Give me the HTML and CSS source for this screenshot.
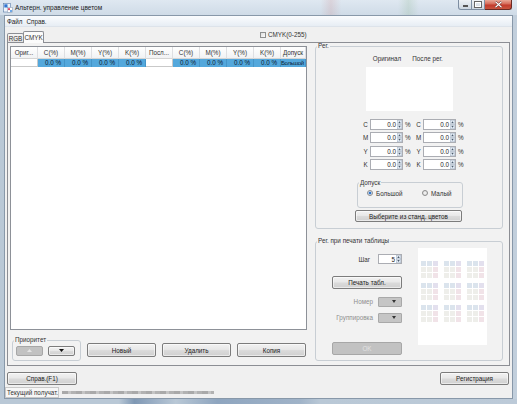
FILE: index.html
```html
<!DOCTYPE html>
<html lang="ru">
<head>
<meta charset="utf-8">
<title>Альтерн. управление цветом</title>
<link rel="stylesheet" href="styles.css">
</head>
<body>
<div class="titlebar">
  <svg class="app-icon" width="10" height="10" viewBox="0 0 10 10">
    <rect x="0.5" y="0.5" width="7" height="8.5" fill="#eef3fa" stroke="#5a7ea8" stroke-width="0.6"/>
    <rect x="1.3" y="1.3" width="3.2" height="3.2" fill="#2f74d0"/>
    <rect x="4.3" y="4.3" width="5.2" height="5.2" fill="#fff" stroke="#7a8ea8" stroke-width="0.5"/>
    <circle cx="6" cy="6.2" r="1.1" fill="#e0405a"/>
    <circle cx="8" cy="8" r="1" fill="#3d8be0"/>
  </svg>
  <span class="title">Альтерн. управление цветом</span>
  <div class="controls">
    <span class="ctl min"><span class="g-min"></span></span>
    <span class="ctl max"><span class="g-max"></span></span>
    <span class="ctl close">
      <svg width="9" height="7" viewBox="0 0 9 7"><path d="M1.5 0.8 L7.5 6.2 M7.5 0.8 L1.5 6.2" stroke="#5a1a14" stroke-width="2.2"/><path d="M1.5 0.8 L7.5 6.2 M7.5 0.8 L1.5 6.2" stroke="#fff" stroke-width="1.2"/></svg>
    </span>
  </div>
</div>

<div class="client">
  <div class="menubar"><span>Файл</span><span>Справ.</span></div>

  <div class="tabrow">
    <div class="tab">RGB</div>
    <div class="tab active">CMYK</div>
    <label class="check"><span class="box"></span>CMYK(0-255)</label>
  </div>

  <div class="panel">
    <div class="leftcol">
      <div class="table">
        <div class="thead">
          <div>Ориг...</div><div>C(%)</div><div>M(%)</div><div>Y(%)</div><div>K(%)</div>
          <div>Посл...</div><div>C(%)</div><div>M(%)</div><div>Y(%)</div><div>K(%)</div><div>Допуск</div>
        </div>
        <div class="trow">
          <div class="w"></div><div class="b">0.0 %</div><div class="b">0.0 %</div><div class="b">0.0 %</div><div class="b">0.0 %</div>
          <div class="w"></div><div class="b">0.0 %</div><div class="b">0.0 %</div><div class="b">0.0 %</div><div class="b">0.0 %</div><div class="b l">Большой</div>
        </div>
      </div>
      <div class="actions">
        <fieldset class="grp prio">
          <legend>Приоритет</legend>
          <div class="prio-btns">
            <button class="btn small disabled"><svg width="5" height="3" viewBox="0 0 5 3"><polygon points="2.5,0 5,3 0,3" fill="#e4e4e4"/></svg></button>
            <button class="btn small"><svg width="5" height="3" viewBox="0 0 5 3"><polygon points="0,0 5,0 2.5,3" fill="#111"/></svg></button>
          </div>
        </fieldset>
        <button class="btn act">Новый</button>
        <button class="btn act">Удалить</button>
        <button class="btn act">Копия</button>
      </div>
    </div>

    <div class="rightcol">
      <fieldset class="grp reg">
        <legend>Рег.</legend>
        <div class="cmp-labels"><span>Оригинал</span><span class="after">После рег.</span></div>
        <div class="cmp-box"></div>
        <div class="spin-grid">
          <span class="lab">C</span><span class="spin"><span class="val">0.0</span><svg class="arr" width="5" height="9" viewBox="0 0 5 9"><rect x="0.25" y="0.25" width="4.5" height="4" fill="#e4ecf5" stroke="#a9b6c6" stroke-width="0.5"/><rect x="0.25" y="4.75" width="4.5" height="4" fill="#e4ecf5" stroke="#a9b6c6" stroke-width="0.5"/><polygon points="2.5,1.3 3.8,3.2 1.2,3.2" fill="#4a5a6c"/><polygon points="1.2,5.8 3.8,5.8 2.5,7.7" fill="#4a5a6c"/></svg></span><span class="pct">%</span>
          <span class="lab">C</span><span class="spin"><span class="val">0.0</span><svg class="arr" width="5" height="9" viewBox="0 0 5 9"><rect x="0.25" y="0.25" width="4.5" height="4" fill="#e4ecf5" stroke="#a9b6c6" stroke-width="0.5"/><rect x="0.25" y="4.75" width="4.5" height="4" fill="#e4ecf5" stroke="#a9b6c6" stroke-width="0.5"/><polygon points="2.5,1.3 3.8,3.2 1.2,3.2" fill="#4a5a6c"/><polygon points="1.2,5.8 3.8,5.8 2.5,7.7" fill="#4a5a6c"/></svg></span><span class="pct">%</span>
          <span class="lab">M</span><span class="spin"><span class="val">0.0</span><svg class="arr" width="5" height="9" viewBox="0 0 5 9"><rect x="0.25" y="0.25" width="4.5" height="4" fill="#e4ecf5" stroke="#a9b6c6" stroke-width="0.5"/><rect x="0.25" y="4.75" width="4.5" height="4" fill="#e4ecf5" stroke="#a9b6c6" stroke-width="0.5"/><polygon points="2.5,1.3 3.8,3.2 1.2,3.2" fill="#4a5a6c"/><polygon points="1.2,5.8 3.8,5.8 2.5,7.7" fill="#4a5a6c"/></svg></span><span class="pct">%</span>
          <span class="lab">M</span><span class="spin"><span class="val">0.0</span><svg class="arr" width="5" height="9" viewBox="0 0 5 9"><rect x="0.25" y="0.25" width="4.5" height="4" fill="#e4ecf5" stroke="#a9b6c6" stroke-width="0.5"/><rect x="0.25" y="4.75" width="4.5" height="4" fill="#e4ecf5" stroke="#a9b6c6" stroke-width="0.5"/><polygon points="2.5,1.3 3.8,3.2 1.2,3.2" fill="#4a5a6c"/><polygon points="1.2,5.8 3.8,5.8 2.5,7.7" fill="#4a5a6c"/></svg></span><span class="pct">%</span>
          <span class="lab">Y</span><span class="spin"><span class="val">0.0</span><svg class="arr" width="5" height="9" viewBox="0 0 5 9"><rect x="0.25" y="0.25" width="4.5" height="4" fill="#e4ecf5" stroke="#a9b6c6" stroke-width="0.5"/><rect x="0.25" y="4.75" width="4.5" height="4" fill="#e4ecf5" stroke="#a9b6c6" stroke-width="0.5"/><polygon points="2.5,1.3 3.8,3.2 1.2,3.2" fill="#4a5a6c"/><polygon points="1.2,5.8 3.8,5.8 2.5,7.7" fill="#4a5a6c"/></svg></span><span class="pct">%</span>
          <span class="lab">Y</span><span class="spin"><span class="val">0.0</span><svg class="arr" width="5" height="9" viewBox="0 0 5 9"><rect x="0.25" y="0.25" width="4.5" height="4" fill="#e4ecf5" stroke="#a9b6c6" stroke-width="0.5"/><rect x="0.25" y="4.75" width="4.5" height="4" fill="#e4ecf5" stroke="#a9b6c6" stroke-width="0.5"/><polygon points="2.5,1.3 3.8,3.2 1.2,3.2" fill="#4a5a6c"/><polygon points="1.2,5.8 3.8,5.8 2.5,7.7" fill="#4a5a6c"/></svg></span><span class="pct">%</span>
          <span class="lab">K</span><span class="spin"><span class="val">0.0</span><svg class="arr" width="5" height="9" viewBox="0 0 5 9"><rect x="0.25" y="0.25" width="4.5" height="4" fill="#e4ecf5" stroke="#a9b6c6" stroke-width="0.5"/><rect x="0.25" y="4.75" width="4.5" height="4" fill="#e4ecf5" stroke="#a9b6c6" stroke-width="0.5"/><polygon points="2.5,1.3 3.8,3.2 1.2,3.2" fill="#4a5a6c"/><polygon points="1.2,5.8 3.8,5.8 2.5,7.7" fill="#4a5a6c"/></svg></span><span class="pct">%</span>
          <span class="lab">K</span><span class="spin"><span class="val">0.0</span><svg class="arr" width="5" height="9" viewBox="0 0 5 9"><rect x="0.25" y="0.25" width="4.5" height="4" fill="#e4ecf5" stroke="#a9b6c6" stroke-width="0.5"/><rect x="0.25" y="4.75" width="4.5" height="4" fill="#e4ecf5" stroke="#a9b6c6" stroke-width="0.5"/><polygon points="2.5,1.3 3.8,3.2 1.2,3.2" fill="#4a5a6c"/><polygon points="1.2,5.8 3.8,5.8 2.5,7.7" fill="#4a5a6c"/></svg></span><span class="pct">%</span>
        </div>
        <fieldset class="grp tol">
          <legend>Допуск</legend>
          <div class="radios">
            <label class="radio first"><span class="dot on"></span>Большой</label>
            <label class="radio"><span class="dot"></span>Малый</label>
          </div>
        </fieldset>
        <button class="btn std">Выберите из станд. цветов</button>
      </fieldset>

      <fieldset class="grp print">
        <legend>Рег. при печати таблицы</legend>
        <div class="print-body">
          <div class="pctrl">
            <div class="frow step"><span class="flab">Шаг</span><span class="spin sm"><span class="val">5</span><svg class="arr" width="5" height="8" viewBox="0 0 5 8"><rect x="0.25" y="0.25" width="4.5" height="3.5" fill="#e4ecf5" stroke="#a9b6c6" stroke-width="0.5"/><rect x="0.25" y="4.25" width="4.5" height="3.5" fill="#e4ecf5" stroke="#a9b6c6" stroke-width="0.5"/><polygon points="2.5,1 3.7,2.9 1.3,2.9" fill="#4a5a6c"/><polygon points="1.3,5.1 3.7,5.1 2.5,7" fill="#4a5a6c"/></svg></span></div>
            <button class="btn wide print-btn">Печать табл.</button>
            <div class="frow num"><span class="flab dim">Номер</span><span class="combo"><svg width="4" height="3" viewBox="0 0 4 3"><polygon points="0,0 4,0 2,3" fill="#333"/></svg></span></div>
            <div class="frow grpg"><span class="flab dim">Группировка</span><span class="combo"><svg width="4" height="3" viewBox="0 0 4 3"><polygon points="0,0 4,0 2,3" fill="#333"/></svg></span></div>
            <button class="btn wide disabled ok">OK</button>
          </div>
          <div class="preview">
            <div class="pgrid">
              <div class="pg"><i class="c1"></i><i class="c1"></i><i class="c2"></i><i class="c3"></i><i class="c3"></i><i class="c4"></i><i class="c3"></i><i class="c3"></i><i class="c4"></i></div>
              <div class="pg"><i class="c1"></i><i class="c1"></i><i class="c2"></i><i class="c3"></i><i class="c3"></i><i class="c4"></i><i class="c3"></i><i class="c3"></i><i class="c4"></i></div>
              <div class="pg"><i class="c1"></i><i class="c1"></i><i class="c2"></i><i class="c3"></i><i class="c3"></i><i class="c4"></i><i class="c3"></i><i class="c3"></i><i class="c4"></i></div>
              <div class="pg"><i class="c1"></i><i class="c1"></i><i class="c2"></i><i class="c3"></i><i class="c3"></i><i class="c4"></i><i class="c3"></i><i class="c3"></i><i class="c4"></i></div>
              <div class="pg"><i class="c1"></i><i class="c1"></i><i class="c2"></i><i class="c3"></i><i class="c3"></i><i class="c4"></i><i class="c3"></i><i class="c3"></i><i class="c4"></i></div>
              <div class="pg"><i class="c1"></i><i class="c1"></i><i class="c2"></i><i class="c3"></i><i class="c3"></i><i class="c4"></i><i class="c3"></i><i class="c3"></i><i class="c4"></i></div>
              <div class="pg"><i class="c1"></i><i class="c1"></i><i class="c2"></i><i class="c3"></i><i class="c3"></i><i class="c4"></i><i class="c3"></i><i class="c3"></i><i class="c4"></i></div>
              <div class="pg"><i class="c1"></i><i class="c1"></i><i class="c2"></i><i class="c3"></i><i class="c3"></i><i class="c4"></i><i class="c3"></i><i class="c3"></i><i class="c4"></i></div>
              <div class="pg"><i class="c1"></i><i class="c1"></i><i class="c2"></i><i class="c3"></i><i class="c3"></i><i class="c4"></i><i class="c3"></i><i class="c3"></i><i class="c4"></i></div>
            </div>
          </div>
        </div>
      </fieldset>
    </div>
  </div>

  <div class="footer">
    <button class="btn foot">Справ.(F1)</button>
    <button class="btn foot reg-btn">Регистрация</button>
  </div>

  <div class="statusbar">
    <span class="status-cell">Текущий получат.</span>
    <span class="status-blur"></span>
  </div>
</div>
<div class="bottomframe"></div>
</body>
</html>
```

FILE: styles.css
```css
* { box-sizing: border-box; }
html, body { margin: 0; padding: 0; }
body {
  width: 517px;
  height: 404px;
  overflow: hidden;
  font-family: "Liberation Sans", Arial, sans-serif;
  font-size: 6.3px;
  color: #1c1c1c;
  background: linear-gradient(90deg, #b9c8d6 0%, #c7d4e0 45%, #bccad8 75%, #c2cfdc 100%);
}

/* title bar */
.titlebar {
  height: 15px;
  display: flex;
  align-items: center;
  padding-left: 3px;
  background:
    linear-gradient(90deg, transparent 62%, rgba(200,120,120,.18) 64%, transparent 66%, transparent 77%, rgba(120,170,120,.18) 79%, transparent 81%),
    linear-gradient(#dfe8f1, #cfdbe7);
}
.app-icon { flex: none; }
.title { margin-left: 2px; font-size: 6.5px; color: #1b1b1b; }
.controls {
  margin-left: auto;
  margin-right: 5px;
  align-self: flex-start;
  display: flex;
  height: 10px;
}
.ctl {
  height: 10px;
  display: flex;
  align-items: center;
  justify-content: center;
  border: 1px solid #7d8ea2;
  border-top: none;
}
.ctl.min { width: 14px; border-radius: 0 0 0 3px; background: linear-gradient(#eef2f6, #cdd7e1); }
.ctl.max { width: 13px; border-left: none; background: linear-gradient(#eef2f6, #cdd7e1); }
.ctl.close {
  width: 27px;
  border-left: none;
  border-color: #6a2b24;
  border-radius: 0 0 3px 0;
  background: linear-gradient(#e9a897 0%, #d56a58 45%, #c23a2c 55%, #c9543e 100%);
}
.g-min { width: 5px; height: 2px; background: #fff; border: 0.5px solid #555; margin-top: 3px; }
.g-max { width: 6px; height: 5px; border: 1px solid #fff; outline: 0.5px solid #666; }

/* client */
.client {
  margin: 0 4px;
  width: 509px;
  height: 384px;
  border: 1px solid #8898a9;
  background: #f0f0f0;
  display: flex;
  flex-direction: column;
}
.menubar {
  height: 11px;
  flex: none;
  display: flex;
  align-items: center;
  gap: 4px;
  padding-left: 2px;
  background: linear-gradient(#fbfcfe, #e7edf4);
  border-bottom: 1px solid #dde3ea;
}

/* tabs */
.tabrow {
  height: 15px;
  flex: none;
  display: flex;
  align-items: flex-end;
  padding-left: 2px;
}
.tab {
  width: 17px;
  height: 9px;
  border: 1px solid #8c8e94;
  border-bottom: none;
  border-radius: 2px 2px 0 0;
  background: linear-gradient(#f5f5f5, #e2e2e2);
  display: flex;
  align-items: center;
  justify-content: center;
  color: #333;
}
.tab.active {
  width: 21px;
  height: 12px;
  margin-bottom: -1px;
  position: relative;
  z-index: 1;
  background: #fbfbfb;
  border-left: 1px solid #8c8e94;
  margin-left: -1px;
}
.check {
  align-self: center;
  margin-left: 216px;
  display: flex;
  align-items: center;
  gap: 2px;
  color: #333;
}
.check .box {
  width: 6px;
  height: 6px;
  border: 1px solid #8e8f8f;
  background: linear-gradient(135deg, #dedede, #fbfbfb);
}

/* panel */
.panel {
  flex: none;
  height: 324px;
  width: 503px;
  margin-left: 2px;
  border: 1px solid #8c8e94;
  background: #f2f2f2;
  display: flex;
  padding-left: 2px;
}
.leftcol { width: 297px; margin-top: 3px; display: flex; flex-direction: column; }

.table {
  height: 284px;
  border: 1px solid #8d9198;
  background: #fff;
}
.thead, .trow {
  display: grid;
  grid-template-columns: repeat(10, 27px) 25px;
}
.thead { height: 12px; }
.thead > div {
  display: flex;
  align-items: center;
  justify-content: center;
  background: linear-gradient(#ffffff, #f1f2f4);
  border-right: 1px solid #dedfe2;
  border-bottom: 1px solid #d5d5d5;
  color: #333;
  white-space: nowrap;
  overflow: hidden;
}
.trow { height: 8px; }
.trow > div { line-height: 8px; white-space: nowrap; overflow: hidden; }
.trow .w { background: #fff; border-right: 1px solid #c9c9c9; border-bottom: 1px solid #c9c9c9; }
.trow .b {
  background: #54a8dc;
  border-right: 1px solid #4595c8;
  text-align: right;
  padding-right: 3px;
  color: #0e2233;
}
.trow .b.l { text-align: left; padding: 0; font-size: 6px; letter-spacing: -0.35px; }

.actions { display: flex; align-items: flex-start; margin-top: 7px; }

/* group boxes */
.grp {
  margin: 0;
  padding: 0;
  min-width: 0;
  border: 1px solid #c8ced4;
  border-radius: 3px;
}
.grp > legend {
  padding: 0 1px;
  margin-left: 1px;
  line-height: 6px;
  font-size: 6.3px;
  color: #333;
}

.prio { width: 69px; height: 24px; margin-left: 2px; }
.prio-btns { display: flex; gap: 5px; padding-left: 3px; margin-top: 2.5px; }

/* buttons */
.btn {
  font: inherit;
  color: #1c1c1c;
  padding: 0;
  border: 1px solid #7c7c7c;
  border-radius: 2px;
  background: linear-gradient(#f2f2f2 0%, #e8e8e8 45%, #dadada 55%, #d0d0d0 100%);
  box-shadow: inset 0 0 0 1px rgba(255,255,255,.55);
  display: flex;
  align-items: center;
  justify-content: center;
  white-space: nowrap;
}
.btn.disabled {
  background: #c2c2c2;
  border-color: #a7a7a7;
  color: #e2e2e2;
  box-shadow: none;
}
.btn.small { width: 27px; height: 10px; }
.btn.act { width: 69px; height: 14px; margin-top: 6px; margin-left: 6px; }

/* right column */
.rightcol { width: 188px; margin-left: 8px; }
.reg { padding-bottom: 6px; }
.cmp-labels {
  width: 87px;
  margin: 6px auto 0;
  display: grid;
  grid-template-columns: 43px 44px;
  line-height: 8px;
  text-align: center;
  color: #333;
}
.cmp-labels .after { padding-right: 6px; }
.cmp-box { width: 87px; height: 44px; margin: 4px auto 0; background: #fff; }

.spin-grid {
  display: grid;
  grid-template-columns: 9px 33px 11px 9px 33px 11px;
  grid-auto-rows: 11px;
  row-gap: 2.5px;
  align-items: center;
  margin: 7.5px 0 0 45px;
}
.spin-grid .lab { text-align: center; color: #333; }
.spin-grid .pct { padding-left: 2px; color: #333; }
.spin {
  height: 11px;
  border: 1px solid #abadb3;
  background: #fff;
  display: flex;
  align-items: center;
}
.spin .val { flex: 1; text-align: right; padding-right: 1px; line-height: 9px; }
.spin .arr { flex: none; }
.spin.sm { width: 24px; height: 10px; }

.tol { width: 106px; margin: 9.5px 0 0 41px; padding-bottom: 10px; }
.radios { display: flex; align-items: center; height: 8px; margin-top: 3.5px; padding-left: 9px; }
.radio { display: flex; align-items: center; gap: 3px; color: #333; }
.radio.first { width: 55px; }
.dot {
  width: 6px;
  height: 6px;
  border-radius: 50%;
  border: 1px solid #8c8c8c;
  background: radial-gradient(circle, #f6f6f6 0%, #d8d8d8 100%);
}
.dot.on { background: radial-gradient(circle, #1f5fb8 0%, #3f86d8 45%, #e9eef5 60%); }

.btn.std { width: 107px; height: 12px; margin: 2.3px 0 0 39px; }

.print { margin-top: 9px; padding-bottom: 5px; }
.print-body { display: flex; padding-left: 16px; }
.pctrl { width: 70px; display: flex; flex-direction: column; }
.frow { display: flex; height: 10px; align-items: center; }
.flab { width: 46px; text-align: right; padding-right: 5px; color: #333; }
.frow.step { margin-top: 10px; }
.frow.step .flab { padding-right: 8px; }
.flab.dim { color: #8e8e8e; }
.btn.wide { width: 70px; height: 13px; }
.print-btn { margin-top: 12px; }
.frow.num { margin-top: 7.5px; }
.frow.grpg { margin-top: 6px; }
.combo {
  width: 24px;
  height: 10px;
  background: #c5c5c5;
  border: 1px solid #a9a9a9;
  border-radius: 1px;
  display: flex;
  align-items: center;
  justify-content: flex-end;
  padding-right: 5px;
}
.ok { margin-top: 19px; }

.preview {
  width: 69px;
  height: 97px;
  margin: 3.5px 0 0 16px;
  background: #fff;
  padding-top: 13px;
}
.pgrid {
  display: grid;
  grid-template-columns: repeat(3, 17px);
  column-gap: 6px;
  row-gap: 5px;
  justify-content: center;
}
.pg { display: grid; grid-template-columns: repeat(3, 5px); grid-auto-rows: 5px; gap: 1px; }
.pg i { display: block; }
.c1 { background: #dbe4ed; }
.c2 { background: #e3e0ee; }
.c3 { background: #eeeeea; }
.c4 { background: #f1e3e8; }

/* footer */
.footer {
  flex: none;
  height: 13px;
  margin-top: 6px;
  display: flex;
  justify-content: space-between;
  padding: 0 3px 0 2px;
}
.btn.foot { width: 70px; height: 13px; }
.btn.reg-btn { width: 69px; }

.statusbar {
  flex: none;
  height: 11px;
  margin-top: 2px;
  display: flex;
  align-items: stretch;
}
.status-cell {
  width: 54px;
  border: 1px solid #c9c9c9;
  background: #f6f6f6;
  line-height: 9px;
  padding-left: 1px;
  color: #333;
  white-space: nowrap;
}
.status-blur {
  align-self: center;
  width: 152px;
  height: 3px;
  margin-left: 3px;
  background: repeating-linear-gradient(90deg, #a9a9a9 0 6px, #c4c4c4 6px 9px, #b2b2b2 9px 14px);
  filter: blur(0.6px);
}

.bottomframe {
  height: 5px;
  background: linear-gradient(90deg, #b9c8d6 0%, #b9c8d6 23%, #7f98b4 26%, #9cb0c6 30%, #b9c8d6 34%, #8ea5bf 42%, #a0b3c8 58%, #b9c8d6 62%, #bccad8 100%);
}
```
